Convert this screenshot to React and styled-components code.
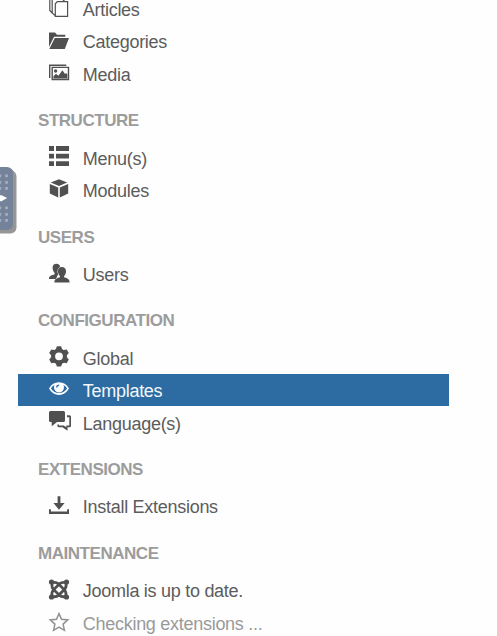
import React from 'react';
import styled, { createGlobalStyle } from 'styled-components';

const Global = createGlobalStyle`
  * { box-sizing: border-box; }
  body { margin: 0; background: #fff; overflow: hidden; }
`;

const Page = styled.main`
  position: relative;
  height: 636px;
  overflow: hidden;
  background: #fefefe;
  font-family: "Liberation Sans", Arial, sans-serif;
`;

const Nav = styled.nav`
  width: 431px;
  margin: -7.5px 0 0 18px;
`;

const Heading = styled.h2`
  margin: 0;
  height: 51.2px;
  padding: 21.2px 0 0 20px;
  font-size: 17px;
  letter-spacing: -0.46px;
  line-height: 20px;
  font-weight: 700;
  color: #9c9c9c;
  text-transform: uppercase;
`;

const Row = styled.a`
  display: flex;
  align-items: flex-start;
  height: 32.55px;
  padding-left: 29px;
  text-decoration: none;
  white-space: nowrap;
  color: ${(p) => (p.$active ? '#f4f7fa' : '#5c5c5c')};
  background: ${(p) => (p.$active ? '#2d6ca2' : 'transparent')};
  opacity: ${(p) => (p.$pending ? 0.62 : 1)};
`;

const Icon = styled.svg`
  flex: none;
  width: 24px;
  height: 24px;
  margin-top: 2.6px;
  overflow: visible;
  color: ${(p) => (p.$active ? '#fff' : '#505050')};
`;

const Label = styled.span`
  margin-left: 11.8px;
  padding-top: 7.2px;
  font-size: 18px;
  letter-spacing: -0.28px;
  line-height: 20px;
`;

const Handle = styled.div`
  position: absolute;
  left: -20px;
  top: 167px;
  width: 33px;
  height: 63px;
  border-radius: 6px;
  background: #75839a;
  box-shadow: 1px 1px 0 #969696, 2px 2px 0 #969696, 3.5px 3.5px 0 #969696;
`;

const Grip = styled.svg`
  display: block;
  width: 33px;
  height: 63px;
`;

const icons = {
  copy: (
    <g fill="none" stroke="currentColor" strokeWidth="1.2">
      <path d="M5.2 18.2 2.8 15.500V2.500H13L15 4.300M8.200 20.500l-3-2.600V4.300h10.300L17.500 6.200" />
      <path fill="#fefefe" d="M10.300 6.600h10.300v14.700H8.300V8.800z" />
    </g>
  ),
  folder: <path fill="currentColor" d="M2 4.5h6l2 2.2h8.3v2H7.1L2 19zM7.8 9.9H22l-4.2 11.2H2.300z" />,
  media: (
    <>
      <path fill="none" stroke="currentColor" strokeWidth="1.4" d="M2.7 18V5.3h16.6M5.2 7.4h16.3v12.1H5.2z" />
      <circle cx="8.6" cy="11" r="1.7" fill="currentColor" />
      <path fill="currentColor" d="M6.4 18.4v-2.2L9 13.8l2.4 2 4-5.6 2.7 3.7 1.1-1 1.2 1.6v3.9z" />
    </>
  ),
  list: <path fill="currentColor" d="M2 2h5v5H2zM9 2h13v5H9zM2 9.7h5v4.8H2zM9 9.7h13v4.8H9zM2 17.2h5V22H2zM9 17.2h13V22H9z" />,
  cube: <path fill="currentColor" d="m12 3.2 8.2 3.4L12 10 3.8 6.6zM2.8 8l8.4 3.4v10.2l-8.4-4zM21.2 8l-8.4 3.4v10.2l8.4-4z" />,
  users: (
    <>
      <path fill="currentColor" d="M9.400 3.800c2.300 0 3.800 1.500 3.800 4 0 2-.9 3.500-1.800 4.400l-.2 1.800L9 19H2c.1-2.500 1-3.200 5.200-4.400.6-.2.6-1.500.1-2.200C6.200 11.300 5.600 9.600 5.600 7.800c0-2.500 1.500-4 3.800-4z" />
      <path fill="currentColor" stroke="#fefefe" strokeWidth="1" paintOrder="stroke" d="M15 7c2.500 0 4 1.700 4 4.300 0 2-.8 3.500-1.700 4.500-.4.700-.3 1.500.3 1.700 3.700 1 4.900 1.900 5 5H7.400c.1-3.100 1.300-4 5-5 .7-.2.7-1 .3-1.700-1-1-1.700-2.500-1.700-4.500C11 8.700 12.500 7 15 7z" />
    </>
  ),
  gear: (
    <>
      <circle cx="12" cy="12.300" r="5.900" fill="none" stroke="currentColor" strokeWidth="4" />
      <g fill="currentColor">
        {[0, 60, 120, 180, 240, 300].map((a) => (
          <path key={a} transform={`rotate(${a} 12 12.3)`} d="M8.500 6.200 9.900 2.200h4.200l1.400 4z" />
        ))}
      </g>
    </>
  ),
  eye: (
    <>
      <path fill="currentColor" fillRule="evenodd" d="M2 12.600C4.300 8.300 7.700 6.200 12 6.200s7.700 2.100 10 6.400c-2.300 4.300-5.700 6.400-10 6.400S4.300 16.900 2 12.600zm1.900 0c1.600 2.700 4.500 4.500 8.100 4.500s6.500-1.800 8.100-4.500c-.8-1.500-2-2.800-3.600-3.700 1.300 4-1.100 7.400-4.500 7.400s-5.800-3.400-4.500-7.400c-1.600.9-2.800 2.200-3.600 3.700z" />
      <circle cx="12" cy="11.700" r="4.600" fill="currentColor" />
      <path fill="none" stroke="#2d6ca2" strokeWidth="1.300" d="M9.700 11.600c0-1.500.9-2.400 2.400-2.400" />
    </>
  ),
  chat: (
    <path fill="currentColor" d="M3.500 2h13Q18 2 18 3.500v8q0 1.500-1.500 1.500H10l-5.300 4.300V13H3.500Q2 13 2 11.500v-8Q2 2 3.500 2zM20 6.200h2.500Q24 6.200 24 7.700v9q0 1.500-1.500 1.500h-2v3.600l-5-3.600h-3.700q-1.400 0-1.400-1.500v-1.200h1.500v.9h4.900l2.500 1.900v-1.900h3V8.200H20z" />
  ),
  download: (
    <path fill="currentColor" d="M10.600 3.300h2.800v6.700h4.200L12 16.800 6.400 10h4.200zM2 16.200h1.900v2.300h16.200v-2.300H22v4.800H2z" />
  ),
  joomla: (
    <>
      <g fill="none" stroke="currentColor" strokeWidth="2.800">
        <path d="M5 6v2.500c-.3 1.500.2 2.500 1.500 3.900l6.300 6.300c1.800 1.500 3.400 1.300 6.200.8" />
        <path d="M5 19c-.5-3-.2-4.300 1.500-6.100l6.300-6.400C14.500 5 16.200 5.100 19 5.500" />
        <path d="M5 5.500c3-.5 4.600-.5 6.300 1.200l6.300 6.400c1.500 1.700 1.700 3.200 1.200 5.900" />
        <path d="M19 6c.5 2.800.2 4.500-1.400 6.200l-6.300 6.400c-1.700 1.400-3.400 1.400-6.300.9" />
      </g>
      <g fill="currentColor">
        <circle cx="4.500" cy="5" r="2.600" /><circle cx="19.500" cy="5" r="2.600" />
        <circle cx="4.500" cy="20" r="2.600" /><circle cx="19.500" cy="20" r="2.600" />
      </g>
    </>
  ),
  star: (
    <path fill="none" stroke="currentColor" strokeWidth="1.500" d="m12 4.600 2.500 5.700 6.300.6-4.700 4.200 1.300 6.200-5.400-3.200-5.400 3.200 1.300-6.200-4.700-4.200 6.300-.6z" />
  ),
};

const sections = [
  { items: [['copy', 'Articles'], ['folder', 'Categories'], ['media', 'Media']] },
  { title: 'Structure', items: [['list', 'Menu(s)'], ['cube', 'Modules']] },
  { title: 'Users', items: [['users', 'Users']] },
  { title: 'Configuration', items: [['gear', 'Global'], ['eye', 'Templates', 'active'], ['chat', 'Language(s)']] },
  { title: 'Extensions', items: [['download', 'Install Extensions']] },
  { title: 'Maintenance', items: [['joomla', 'Joomla is up to date.'], ['star', 'Checking extensions ...', 'pending']] },
];

export default function App() {
  return (
    <Page>
      <Global />
      <Nav>
        {sections.map((section, i) => (
          <section key={i}>
            {section.title && <Heading>{section.title}</Heading>}
            {section.items.map(([icon, label, state]) => (
              <Row key={label} $active={state === 'active'} $pending={state === 'pending'}>
                <Icon viewBox="0 0 24 24" $active={state === 'active'}>{icons[icon]}</Icon>
                <Label>{label}</Label>
              </Row>
            ))}
          </section>
        ))}
      </Nav>
      <Handle>
        <Grip viewBox="0 0 33 63">
          <g fill="#a4afbf">
            {[7.5, 14, 20, 39.5, 46, 52].map((y) => (
              <React.Fragment key={y}>
                <rect x="18.500" y={y} width="2.700" height="2.700" />
                <rect x="25.200" y={y} width="2.700" height="2.700" />
              </React.Fragment>
            ))}
          </g>
          <path fill="#fff" d="M16 31l5-3 6.200 3-6.200 3.500z" />
        </Grip>
      </Handle>
    </Page>
  );
}
